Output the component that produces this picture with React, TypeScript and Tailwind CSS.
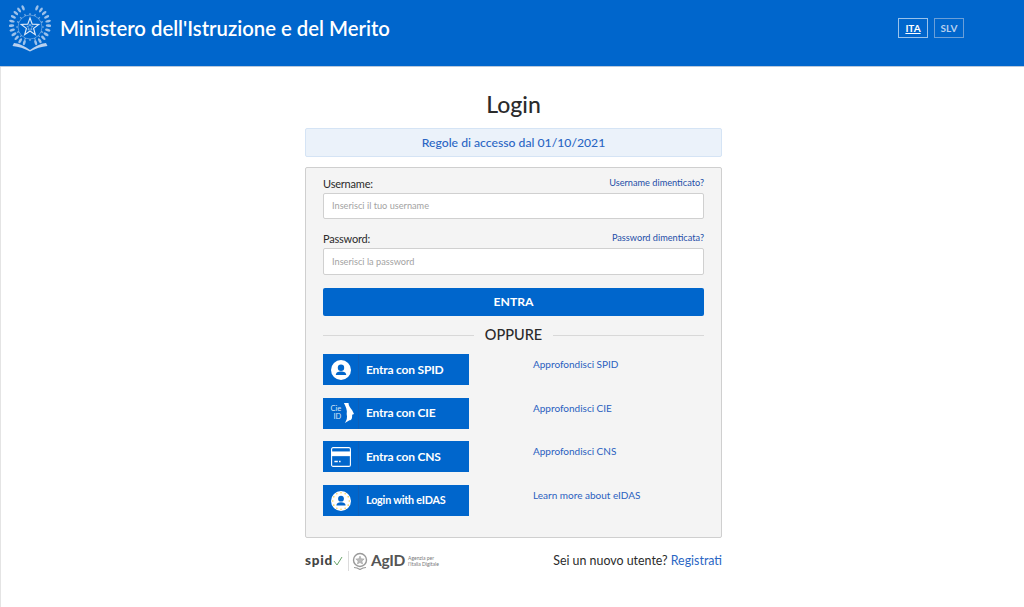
import type { ReactNode } from "react"

const FONT = "font-['Lato','Noto_Sans',sans-serif]"

function Emblem() {
  const leaves = Array.from({ length: 11 }, (_, i) => i)
  const teeth = Array.from({ length: 16 }, (_, i) => i)
  return (
    <svg viewBox="0 0 42 47" className="h-[47px] w-[42px] blur-[0.4px]" fill="none" stroke="#dbe8f8">
      {leaves.map((i) => {
        // wreath leaves, mirrored left and right, open at the top
        const deg = i * 14 + 22
        const a = (deg * Math.PI) / 180
        const dx = 18.5 * Math.sin(a)
        const dy = 18.5 * Math.cos(a)
        return (
          <g key={i} fill="#c4d9f3" stroke="none" opacity="0.8">
            <ellipse cx={21 + dx} cy={20 - dy} rx="1.3" ry="2.8" transform={`rotate(${deg} ${21 + dx} ${20 - dy})`} />
            <ellipse cx={21 - dx} cy={20 - dy} rx="1.3" ry="2.8" transform={`rotate(${-deg} ${21 - dx} ${20 - dy})`} />
          </g>
        )
      })}
      {teeth.map((i) => {
        const a = (i * Math.PI) / 8
        return (
          <path
            key={i}
            d={`M${21 + 12 * Math.cos(a)} ${22 + 12 * Math.sin(a)}L${21 + 14 * Math.cos(a)} ${22 + 14 * Math.sin(a)}`}
            strokeWidth="1.2"
            opacity="0.55"
          />
        )
      })}
      <circle cx="21" cy="22" r="12" strokeWidth="0.7" opacity="0.55" />
      <path d="M21 13l2.200 6.100 6.500.3-5.100 4 1.700 6.300-5.300-3.600-5.300 3.600 1.700-6.300-5.100-4 6.500-.3z" strokeWidth="1.2" />
      <path d="M21 19l.9 2.200 2.300.1-1.800 1.500.6 2.300-2-1.300-2 1.300.6-2.300-1.800-1.500 2.300-.1z" strokeWidth="0.7" opacity="0.7" />
      <path d="M5 38c6 .5 11 3.500 16 7 5-3.500 10-6.500 16-7l1.500 3c-6 .5-12 2.500-17.500 5.500C15.500 43.500 9.500 41.500 3.500 41z" fill="#b9d1ef" stroke="none" />
    </svg>
  )
}

function UserIcon() {
  return (
    <svg viewBox="0 0 20 20" className="h-[20px] w-[20px]">
      <circle cx="10" cy="10" r="10" fill="#fff" />
      <circle cx="10" cy="7.7" r="3.2" fill="#0066cc" />
      <path d="M4.800 15c0-2.600 2.200-3.600 5.200-3.600s5.200 1 5.200 3.600z" fill="#0066cc" />
    </svg>
  )
}

function EidasIcon() {
  const stars = Array.from({ length: 12 }, (_, i) => i)
  return (
    <svg viewBox="0 0 20 20" className="h-[20px] w-[20px]">
      <circle cx="10" cy="10" r="10" fill="#fff" />
      {stars.map((i) => (
        <circle
          key={i}
          cx={10 + 8.3 * Math.cos((i * Math.PI) / 6)}
          cy={10 + 8.3 * Math.sin((i * Math.PI) / 6)}
          r="0.8"
          fill="#f2cf55"
        />
      ))}
      <circle cx="10" cy="7.7" r="2.9" fill="#0066cc" />
      <path d="M5.400 14.600c0-2.400 2-3.300 4.600-3.300s4.600.9 4.600 3.300z" fill="#0066cc" />
    </svg>
  )
}

function CieIcon() {
  return (
    <div className="relative h-[24px] w-[20px] text-[#dbe8f8]">
      <span className="absolute left-0 top-[4px] text-[7.5px] leading-[8px]">Cie</span>
      <span className="absolute left-[3px] top-[12px] text-[7.5px] leading-[8px]">ID</span>
      <svg viewBox="0 0 12 24" className="absolute right-[-3px] top-0 h-[24px] w-[11px]">
        <path d="M1 1h5c0 3 2 5 4 8l2 4-2 1c0 3 0 6-3 6l-5 3c2-3 3-6 2-10 1-4-1-8-3-12z" fill="#fff" />
      </svg>
    </div>
  )
}

function CardIcon() {
  return (
    <svg viewBox="0 0 20 20" className="h-[20px] w-[20px]" fill="none" stroke="#fff" strokeWidth="1.1">
      <rect x="0.6" y="0.6" width="18.8" height="18.8" rx="1.5" />
      <rect x="0.6" y="5" width="18.8" height="3.6" fill="#fff" />
      <path d="M3.400 14.600h3.400M8 14.600h1.600" strokeWidth="1.5" />
    </svg>
  )
}

function LoginRow({ icon, label, link, size = "text-[12px]" }: { icon: ReactNode; label: string; link: string; size?: string }) {
  return (
    <div className="flex">
      <a className="flex h-[31px] w-[146px] items-center bg-[#0066cc] text-white">
        <span className="flex h-full w-[36px] shrink-0 items-center justify-center border-r border-[#0f5fb8]">{icon}</span>
        <span className={`ml-[7px] font-bold tracking-[-0.2px] ${size}`}>{label}</span>
      </a>
      <a className="ml-[64px] mt-[3px] text-[10px] leading-[14px] text-[#2a5fc0]">{link}</a>
    </div>
  )
}

function Field({ label, forgot, placeholder, gap, inputH }: { label: string; forgot: string; placeholder: string; gap: string; inputH: string }) {
  return (
    <div className={gap}>
      <div className="flex h-[20px] items-end justify-between">
        <span className="mb-[1px] text-[11px] leading-[16px] tracking-[-0.2px] text-[#2b2b2b]">{label}</span>
        <a className="mb-[3px] text-[9.2px] leading-[14px] text-[#1f4fa8]">{forgot}</a>
      </div>
      <div className={`flex items-center rounded-[2px] border border-[#d0d0d0] bg-white px-[8px] text-[9.2px] text-[#a3a3a3] ${inputH}`}>
        {placeholder}
      </div>
    </div>
  )
}

export default function App() {
  return (
    <div className={`${FONT} flex h-[607px] w-[1024px] flex-col overflow-hidden bg-white`}>
      <header className="flex h-[67px] shrink-0 items-start justify-between border-b border-[#b9c9dc] bg-[#0066cc] pl-[9px] pr-[60px] pt-[5px] text-white">
        <div className="flex items-center">
          <Emblem />
          <h1 className="ml-[9px] text-[20.3px] font-semibold leading-[47px]">Ministero dell'Istruzione e del Merito</h1>
        </div>
        <div className="mt-[13px] flex gap-[6px] text-[10px] font-bold">
          <a className="flex h-[20px] w-[30px] items-center justify-center border border-[#99c2eb] underline">ITA</a>
          <a className="flex h-[20px] w-[30px] items-center justify-center border border-[#6a9fd8] text-[#b4cfee]">SLV</a>
        </div>
      </header>

      <div className="flex-1 border-l border-[#e4e4e4]">
        <main className="ml-[304px] flex w-[417px] flex-col">
          <h2 className="mt-[23px] text-center text-[23px] font-medium leading-[28px] text-[#2b2b2b]">Login</h2>
          <div className="mt-[10px] flex h-[29px] items-center justify-center rounded-[2px] border border-[#d5e4f5] bg-[#ebf2fa] pt-px text-[12.2px] font-medium text-[#2a66c4]">
            Regole di accesso dal 01/10/2021
          </div>

          <section className="mt-[10px] h-[371px] rounded-[2px] border border-[#cfcfcf] bg-[#f4f4f4] px-[17px] pt-[5px]">
            <Field label="Username:" forgot="Username dimenticato?" placeholder="Inserisci il tuo username" gap="" inputH="h-[26px]" />
            <Field label="Password:" forgot="Password dimenticata?" placeholder="Inserisci la password" gap="mt-[9px]" inputH="h-[27px]" />
            <button className="mt-[13px] block h-[28px] w-full rounded-[2px] bg-[#0066cc] pt-px text-[12.2px] font-bold text-white">ENTRA</button>
            <div className="mt-[10px] flex h-[18px] items-center">
              <span className="h-px flex-1 bg-[#d8d8d8]" />
              <span className="mx-[11px] text-[14.5px] font-medium text-[#2b2b2b]">OPPURE</span>
              <span className="h-px flex-1 bg-[#d8d8d8]" />
            </div>
            <div className="mt-[10px] flex flex-col gap-[12.7px]">
              <LoginRow icon={<UserIcon />} label="Entra con SPID" link="Approfondisci SPID" />
              <LoginRow icon={<CieIcon />} label="Entra con CIE" link="Approfondisci CIE" />
              <LoginRow icon={<CardIcon />} label="Entra con CNS" link="Approfondisci CNS" />
              <LoginRow icon={<EidasIcon />} label="Login with eIDAS" link="Learn more about eIDAS" size="text-[10.8px]" />
            </div>
          </section>

          <footer className="mt-[12px] flex h-[22px] items-center justify-between">
            <div className="flex items-center text-[#555]">
              <span className="text-[13.5px] font-black leading-none tracking-[0.8px] text-[#444]">spid</span>
              <svg viewBox="0 0 10 10" className="h-[10px] w-[10px]" fill="none" stroke="#6aa56a" strokeWidth="1">
                <path d="M1 5l3 4 5-8" />
              </svg>
              <span className="ml-[5px] h-[20px] w-px bg-[#dcdcdc]" />
              <svg viewBox="0 0 16 18" className="ml-[3px] h-[18px] w-[16px]" fill="none" stroke="#999">
                <circle cx="8" cy="8" r="6.5" strokeWidth="1.4" />
                <path d="M8 4l1.200 2.800 3 .2-2.300 2 .7 3L8 10.500 5.400 12l.7-3L3.800 7l3-.2z" fill="#bbb" strokeWidth="0.5" />
                <path d="M2 15.500c3 0 4.500 1 6 2 1.500-1 3-2 6-2" strokeWidth="1.2" />
              </svg>
              <span className="ml-[3px] text-[15.5px] font-bold leading-none tracking-[-0.3px] text-[#555]">AgID</span>
              <span className="ml-[3px] w-[36px] text-[5px] leading-[6.5px] text-[#777]">Agenzia per l'Italia Digitale</span>
            </div>
            <div className="text-[12.4px] text-[#2b2b2b]">
              Sei un nuovo utente? <a className="text-[#2a66c4]">Registrati</a>
            </div>
          </footer>
        </main>
      </div>
    </div>
  )
}
